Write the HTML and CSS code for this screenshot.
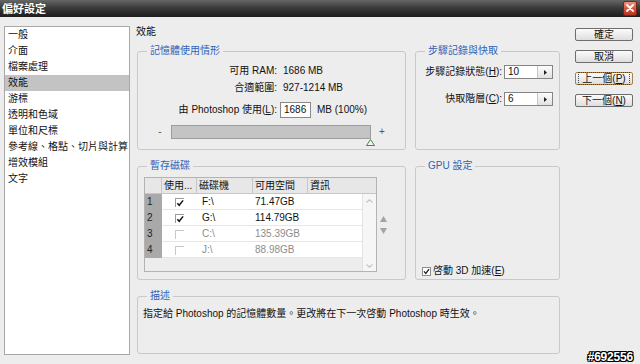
FILE: index.html
```html
<!DOCTYPE html>
<html lang="zh-Hant">
<head>
    <meta charset="UTF-8">
    <meta name="viewport" content="width=device-width, initial-scale=1.0">
    <title>偏好設定</title>
    <link rel="stylesheet" href="styles.css">
</head>
<body>
    <!-- Window title bar -->
    <div class="titlebar">
        <span class="title">偏好設定</span>
        <div class="close-btn">
            <svg width="8" height="8" viewBox="0 0 8 8"><path d="M1 1 L7 7 M7 1 L1 7" stroke="#fff" stroke-width="1.8" stroke-linecap="round"/></svg>
        </div>
    </div>

    <div class="dialog">
        <!-- Category list -->
        <ul class="category-list">
            <li>一般</li>
            <li>介面</li>
            <li>檔案處理</li>
            <li class="active">效能</li>
            <li>游標</li>
            <li>透明和色域</li>
            <li>單位和尺標</li>
            <li>參考線、格點、切片與計算</li>
            <li>增效模組</li>
            <li>文字</li>
        </ul>

        <!-- Performance panel -->
        <div class="panel">
            <div class="panel-title">效能</div>

            <div class="groups">
                <fieldset class="group">
                    <legend>記憶體使用情形</legend>
                    <div class="memory-rows">
                        <div class="field-row">
                            <span class="field-label">可用 RAM:</span>
                            <span class="field-value">1686 MB</span>
                        </div>
                        <div class="field-row second">
                            <span class="field-label">合適範圍:</span>
                            <span class="field-value">927-1214 MB</span>
                        </div>
                        <div class="field-row use-row">
                            <span class="field-label">由 Photoshop 使用(<u>L</u>):</span>
                            <span class="text-input">1686</span>
                            <span class="unit">MB (100%)</span>
                        </div>
                        <div class="slider-row">
                            <span class="slider-sign">-</span>
                            <div class="slider-track">
                                <svg class="slider-thumb" width="9" height="7" viewBox="0 0 9 7"><polygon points="4.5,0.5 8.5,6.5 0.5,6.5" fill="#eef6ee" stroke="#4f7f52"/></svg>
                            </div>
                            <span class="slider-sign">+</span>
                        </div>
                    </div>
                </fieldset>

                <fieldset class="group">
                    <legend>步驟記錄與快取</legend>
                    <div class="history-rows">
                        <div class="history-row">
                            <span class="history-label">步驟記錄狀態(<u>H</u>):</span>
                            <span class="spin-input">
                                <span class="spin-value">10</span>
                                <span class="spin-btn"><svg width="3" height="5" viewBox="0 0 3 5"><polygon points="0,0 3,2.5 0,5" fill="#222"/></svg></span>
                            </span>
                        </div>
                        <div class="history-row">
                            <span class="history-label">快取階層(<u>C</u>):</span>
                            <span class="spin-input">
                                <span class="spin-value">6</span>
                                <span class="spin-btn"><svg width="3" height="5" viewBox="0 0 3 5"><polygon points="0,0 3,2.5 0,5" fill="#222"/></svg></span>
                            </span>
                        </div>
                    </div>
                </fieldset>

                <fieldset class="group">
                    <legend>暫存磁碟</legend>
                    <div class="scratch-body">
                        <div class="disk-table">
                            <div class="disk-head">
                                <span></span>
                                <span>使用...</span>
                                <span>磁碟機</span>
                                <span>可用空間</span>
                                <span>資訊</span>
                            </div>
                            <div class="disk-body">
                                <div class="disk-list">
                                    <div class="disk-row">
                                        <span class="col-num">1</span>
                                        <span class="col-use"><span class="cell-check on"><svg width="9" height="8" viewBox="0 0 9 8"><path d="M1.5 4.2 L3.6 6.6 L8 1" fill="none" stroke="#111" stroke-width="1.6"/></svg></span></span>
                                        <span class="col-drive">F:\</span>
                                        <span class="col-space">71.47GB</span>
                                        <span></span>
                                    </div>
                                    <div class="disk-row">
                                        <span class="col-num">2</span>
                                        <span class="col-use"><span class="cell-check on"><svg width="9" height="8" viewBox="0 0 9 8"><path d="M1.5 4.2 L3.6 6.6 L8 1" fill="none" stroke="#111" stroke-width="1.6"/></svg></span></span>
                                        <span class="col-drive">G:\</span>
                                        <span class="col-space">114.79GB</span>
                                        <span></span>
                                    </div>
                                    <div class="disk-row off">
                                        <span class="col-num">3</span>
                                        <span class="col-use"><span class="cell-check"></span></span>
                                        <span class="col-drive">C:\</span>
                                        <span class="col-space">135.39GB</span>
                                        <span></span>
                                    </div>
                                    <div class="disk-row off">
                                        <span class="col-num">4</span>
                                        <span class="col-use"><span class="cell-check"></span></span>
                                        <span class="col-drive">J:\</span>
                                        <span class="col-space">88.98GB</span>
                                        <span></span>
                                    </div>
                                    <div class="disk-filler"></div>
                                </div>
                                <div class="v-scroll">
                                    <svg width="7" height="4" viewBox="0 0 7 4"><path d="M0.5 3.5 L3.5 0.8 L6.5 3.5" fill="none" stroke="#c4c4c4" stroke-width="1.2"/></svg>
                                    <svg width="7" height="4" viewBox="0 0 7 4"><path d="M0.5 0.5 L3.5 3.2 L6.5 0.5" fill="none" stroke="#c4c4c4" stroke-width="1.2"/></svg>
                                </div>
                            </div>
                        </div>
                        <div class="order-arrows">
                            <svg width="7" height="6" viewBox="0 0 7 6"><polygon points="3.5,0 7,6 0,6" fill="#a3a3a3"/></svg>
                            <svg width="7" height="6" viewBox="0 0 7 6"><polygon points="0,0 7,0 3.5,6" fill="#a3a3a3"/></svg>
                        </div>
                    </div>
                </fieldset>

                <fieldset class="group">
                    <legend>GPU 設定</legend>
                    <div class="gpu-body">
                        <div class="check-label">
                            <span class="checkbox"><svg width="7" height="7" viewBox="0 0 7 7"><path d="M1 3.4 L2.8 5.4 L6 1.2" fill="none" stroke="#222" stroke-width="1.3"/></svg></span>
                            <span>啓動 3D 加速(<u>E</u>)</span>
                        </div>
                    </div>
                </fieldset>

                <fieldset class="group desc-group">
                    <legend>描述</legend>
                    <p class="desc-text">指定給 Photoshop 的記憶體數量。更改將在下一次啓動 Photoshop 時生效。</p>
                </fieldset>
            </div>
        </div>

        <!-- Dialog buttons -->
        <div class="buttons">
            <div class="button">確定</div>
            <div class="button">取消</div>
            <div class="button default"><span>上一個(<u>P</u>)</span></div>
            <div class="button">下一個(<u>N</u>)</div>
        </div>
    </div>

    <div class="watermark">#692556</div>
</body>
</html>
```

FILE: styles.css
```css
* {
    margin: 0;
    padding: 0;
    box-sizing: border-box;
}

body {
    position: relative;
    width: 640px;
    height: 364px;
    overflow: hidden;
    background-color: #ededed;
    color: #111;
    font-family: "Liberation Sans", "Noto Sans CJK TC", sans-serif;
    font-size: 10px;
    line-height: 12px;
}

u {
    text-decoration: underline;
    text-underline-offset: 1px;
}

/* Title bar */
.titlebar {
    height: 17px;
    display: flex;
    align-items: center;
    justify-content: space-between;
    padding: 0 3px 0 2px;
    background: linear-gradient(#676767, #3b3b3b 45%, #1d1d1d);
}

.title {
    color: #fff;
    font-size: 11px;
    font-weight: bold;
}

.close-btn {
    width: 14px;
    height: 15px;
    margin-top: -1px;
    display: flex;
    align-items: center;
    justify-content: center;
    border: 1px solid #7a2416;
    border-radius: 2px;
    background: linear-gradient(#f0917c, #d3523c 55%, #b8331f);
}

.dialog {
    display: flex;
    padding: 9px 0 0 4px;
}

/* Category list */
.category-list {
    list-style: none;
    width: 126px;
    height: 329px;
    background-color: #fff;
    border: 1px solid #a8a8a8;
}

.category-list li {
    height: 16px;
    line-height: 16px;
    padding-left: 3px;
}

.category-list li.active {
    background-color: #c3c3c3;
}

/* Panel */
.panel {
    width: 423px;
    margin-left: 7px;
}

.panel-title {
    height: 12px;
    margin-left: -1px;
}

.groups {
    display: grid;
    grid-template-columns: 269px 145px;
    grid-template-rows: 105px 120px 64px;
    column-gap: 9px;
    row-gap: 10px;
    margin-top: 7px;
}

.group {
    min-width: 0;
    padding: 0;
    border: 1px solid #c9c9c9;
    border-radius: 3px;
}

.group legend {
    margin-left: 9px;
    padding: 0 3px;
    color: #2f62b8;
    line-height: 12px;
}

.desc-group {
    grid-column: 1 / 3;
}

/* Memory usage */
.memory-rows {
    padding-top: 6px;
}

.field-row {
    display: flex;
    align-items: center;
    height: 16px;
}

.field-row.second {
    margin-top: 1px;
}

.field-row.use-row {
    margin-top: 6px;
}

.field-label {
    width: 139px;
    text-align: right;
}

.field-value {
    margin-left: 6px;
}

.text-input {
    width: 31px;
    height: 16px;
    margin-left: 3px;
    padding-left: 3px;
    line-height: 14px;
    background-color: #fff;
    border: 1px solid #8a8a8a;
}

.unit {
    margin-left: 6px;
}

.slider-row {
    display: flex;
    align-items: center;
    height: 14px;
    margin-top: 7px;
    padding-left: 18px;
}

.slider-sign {
    width: 8px;
    text-align: center;
    color: #555;
}

.slider-track {
    position: relative;
    width: 200px;
    height: 14px;
    margin: 0 7px;
    background-color: #c4c4c4;
    border: 1px solid #9d9d9d;
}

.slider-thumb {
    position: absolute;
    right: -5px;
    top: 13px;
}

/* History & cache */
.history-rows {
    padding-top: 8px;
}

.history-row {
    display: flex;
    align-items: center;
    height: 14px;
}

.history-row + .history-row {
    margin-top: 13px;
}

.history-label {
    width: 86px;
    text-align: right;
}

.spin-input {
    display: flex;
    width: 49px;
    height: 14px;
    margin-left: 2px;
    background-color: #fff;
    border: 1px solid #858585;
}

.spin-value {
    flex-grow: 1;
    padding-left: 3px;
    line-height: 12px;
}

.spin-btn {
    width: 15px;
    display: flex;
    align-items: center;
    justify-content: center;
    border-left: 1px solid #c6c6c6;
    background: linear-gradient(#fcfcfc, #e2e2e2);
}

/* Scratch disks */
.scratch-body {
    display: flex;
    align-items: center;
    padding: 5px 0 0 6px;
}

.disk-table {
    width: 233px;
    height: 95px;
    display: flex;
    flex-direction: column;
    border: 1px solid #b3b3b3;
}

.disk-head {
    display: grid;
    grid-template-columns: 17px 35px 56px 55px 1fr;
    height: 16px;
    background-color: #e7e7e7;
    border-bottom: 1px solid #c6c6c6;
}

.disk-head span {
    padding-left: 2px;
    line-height: 15px;
    border-right: 1px solid #c6c6c6;
    white-space: nowrap;
    overflow: hidden;
}

.disk-head span:last-child {
    border-right: none;
}

.disk-body {
    flex-grow: 1;
    display: flex;
}

.disk-list {
    flex-grow: 1;
    display: flex;
    flex-direction: column;
    background-color: #fff;
}

.disk-row {
    display: grid;
    grid-template-columns: 17px 35px 56px 55px 1fr;
    height: 16px;
    line-height: 16px;
    border-bottom: 1px solid #e6e6e6;
}

.disk-row.off {
    color: #8c8c8c;
}

.col-num {
    padding-left: 2px;
    color: #222;
    background-color: #a9a9a9;
}

.col-use {
    display: flex;
    align-items: center;
    justify-content: center;
}

.col-drive {
    padding-left: 5px;
}

.col-space {
    padding-left: 2px;
}

.cell-check {
    width: 9px;
    height: 9px;
    display: flex;
    align-items: center;
    justify-content: center;
    border-top: 1px solid #c8c8c8;
    border-left: 1px solid #c8c8c8;
}

.cell-check.on {
    border-color: #9a9a9a;
}

.disk-filler {
    flex-grow: 1;
    background-color: #ededed;
}

.v-scroll {
    width: 14px;
    display: flex;
    flex-direction: column;
    align-items: center;
    justify-content: space-between;
    padding: 5px 0 3px;
    background-color: #f6f6f6;
    border-left: 1px solid #e3e3e3;
}

.order-arrows {
    display: flex;
    flex-direction: column;
    gap: 6px;
    margin-left: 3px;
}

/* GPU */
.gpu-body {
    height: 107px;
    display: flex;
    flex-direction: column;
    justify-content: flex-end;
    padding: 0 0 2px 6px;
}

.check-label {
    display: flex;
    align-items: center;
    gap: 2px;
}

.checkbox {
    width: 9px;
    height: 9px;
    display: flex;
    align-items: center;
    justify-content: center;
    background-color: #fff;
    border: 1px solid #8c8c8c;
}

/* Description */
.desc-text {
    padding: 6px 0 0 5px;
}

/* Buttons */
.buttons {
    width: 58px;
    margin-left: 15px;
    padding-top: 2px;
    display: flex;
    flex-direction: column;
    gap: 9px;
}

.button {
    height: 13px;
    display: flex;
    align-items: center;
    justify-content: center;
    line-height: 11px;
    border: 1px solid #6e6e6e;
    border-radius: 2px;
    background: linear-gradient(#fbfbfb, #dedede);
}

.button.default {
    border-color: #a8804c;
}

.button.default span {
    padding: 0 3px;
    outline: 1px dotted #444;
}

.watermark {
    position: absolute;
    right: 7px;
    bottom: 1px;
    color: #fff;
    font-size: 12px;
    font-weight: bold;
    letter-spacing: -0.2px;
    text-shadow: 1px 0 0 #000, -1px 0 0 #000, 0 1px 0 #000, 0 -1px 0 #000,
        1px 1px 0 #000, -1px -1px 0 #000, 1px -1px 0 #000, -1px 1px 0 #000;
}
```
